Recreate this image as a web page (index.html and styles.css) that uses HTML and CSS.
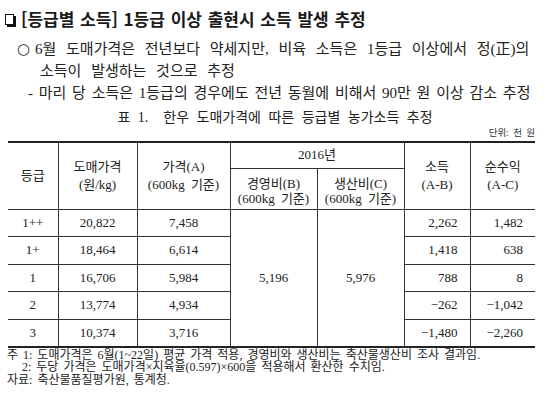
FILE: index.html
```html
<!DOCTYPE html>
<html lang="ko">
<head>
<meta charset="utf-8">
<title>등급별 소득</title>
<link rel="stylesheet" href="styles.css">
</head>
<body>
<div class="page">
  <h1 class="title"><span class="box"></span>[등급별 소득] 1등급 이상 출현시 소득 발생 추정</h1>
  <p class="point"><span class="bullet">○</span>6월 도매가격은 전년보다 약세지만, 비육 소득은 1등급 이상에서 정(正)의<br>소득이 발생하는 것으로 추정</p>
  <p class="sub">- 마리 당 소득은 1등급의 경우에도 전년 동월에 비해서 90만 원 이상 감소 추정</p>
  <p class="caption">표 1.&nbsp; 한우 도매가격에 따른 등급별 농가소득 추정</p>
  <div class="unit">단위: 천 원</div>
  <table class="data">
    <colgroup>
      <col class="c1"><col class="c2"><col class="c3"><col class="c4"><col class="c5"><col class="c6"><col class="c7">
    </colgroup>
    <thead>
      <tr class="h1">
        <th rowspan="2">등급</th>
        <th rowspan="2">도매가격<br>(원/kg)</th>
        <th rowspan="2">가격(A)<br>(600kg 기준)</th>
        <th colspan="2" class="year">2016년</th>
        <th rowspan="2">소득<br>(A-B)</th>
        <th rowspan="2">순수익<br>(A-C)</th>
      </tr>
      <tr class="h2">
        <th class="sm">경영비(B)<br>(600kg 기준)</th>
        <th class="sm">생산비(C)<br>(600kg 기준)</th>
      </tr>
    </thead>
    <tbody>
      <tr>
        <td>1++</td><td>20,822</td><td>7,458</td>
        <td rowspan="5">5,196</td><td rowspan="5">5,976</td>
        <td class="num">2,262</td><td class="num">1,482</td>
      </tr>
      <tr><td>1+</td><td>18,464</td><td>6,614</td><td class="num">1,418</td><td class="num">638</td></tr>
      <tr><td>1</td><td>16,706</td><td>5,984</td><td class="num">788</td><td class="num">8</td></tr>
      <tr><td>2</td><td>13,774</td><td>4,934</td><td class="num">−262</td><td class="num">−1,042</td></tr>
      <tr><td>3</td><td>10,374</td><td>3,716</td><td class="num">−1,480</td><td class="num">−2,260</td></tr>
    </tbody>
  </table>
  <div class="notes">
    <div>주 1: 도매가격은 6월(1~22일) 평균 가격 적용, 경영비와 생산비는 축산물생산비 조사 결과임.</div>
    <div class="indent">2: 두당 가격은 도매가격×지육율(0.597)×600을 적용해서 환산한 수치임.</div>
    <div>자료: 축산물품질평가원, 통계청.</div>
  </div>
</div>
</body>
</html>
```

FILE: styles.css
```css
html, body {
  margin: 0;
  padding: 0;
  background: #ffffff;
}

body {
  font-family: "Liberation Serif", "Noto Sans CJK KR", serif;
  color: #222222;
}

.page {
  width: 550px;
  height: 420px;
  overflow: hidden;
}

.title {
  margin: 0;
  padding-left: 5px;
  font-family: "Noto Sans CJK KR", sans-serif;
  font-weight: 700;
  font-size: 17px;
  line-height: 38px;
  height: 38px;
  word-spacing: 1px;
  display: flex;
  align-items: center;
  color: #1a1a1a;
}

.box {
  display: inline-block;
  width: 7px;
  height: 9px;
  border: 1.5px solid #111;
  box-shadow: 2px 2px 0 #111;
  margin-right: 7px;
  margin-top: 1px;
}

.point {
  margin: 0;
  font-size: 15px;
  line-height: 22px;
  padding-left: 40px;
  text-indent: -23px;
  word-spacing: 6px;
}

.bullet {
  display: inline-block;
  width: 18px;
  text-indent: 0;
  font-size: 15px;
  font-family: "DejaVu Sans", sans-serif;
  word-spacing: 0;
}

.sub {
  margin: 0;
  padding-left: 28px;
  font-size: 15px;
  line-height: 22px;
  word-spacing: 2px;
}

.caption {
  margin: 4px 0 0;
  text-align: center;
  font-size: 14px;
  line-height: 20px;
  word-spacing: 4px;
}

.unit {
  width: 535px;
  text-align: right;
  font-size: 9.5px;
  line-height: 11px;
  margin-bottom: 2px;
  word-spacing: 2px;
  color: #333;
}

.data {
  margin-left: 8px;
  width: 527px;
  border-collapse: collapse;
  table-layout: fixed;
  border-top: 2px solid #222;
  border-bottom: 2px solid #222;
  font-size: 13px;
}

.c1 { width: 50px; }
.c2 { width: 79px; }
.c3 { width: 93px; }
.c4 { width: 87px; }
.c5 { width: 87px; }
.c6 { width: 66px; }
.c7 { width: 65px; }

.data th,
.data td {
  border: 1px solid #333;
  padding: 0;
  text-align: center;
  font-weight: 400;
  vertical-align: middle;
}

.data tr > :first-child { border-left: none; }
.data tr > :last-child { border-right: none; }

.data th {
  line-height: 18px;
  word-spacing: 3px;
}

.data th.sm {
  line-height: 15px;
  padding-top: 4px;
}

.h1 { height: 26px; }
.h2 { height: 41px; }

.data tbody tr { height: 27.5px; }

.data td.num {
  text-align: right;
  padding-right: 12px;
}

.notes {
  padding-left: 7px;
  padding-top: 1px;
  font-size: 12px;
  line-height: 12.5px;
  word-spacing: 2px;
}

.notes .indent {
  padding-left: 15px;
}
```
